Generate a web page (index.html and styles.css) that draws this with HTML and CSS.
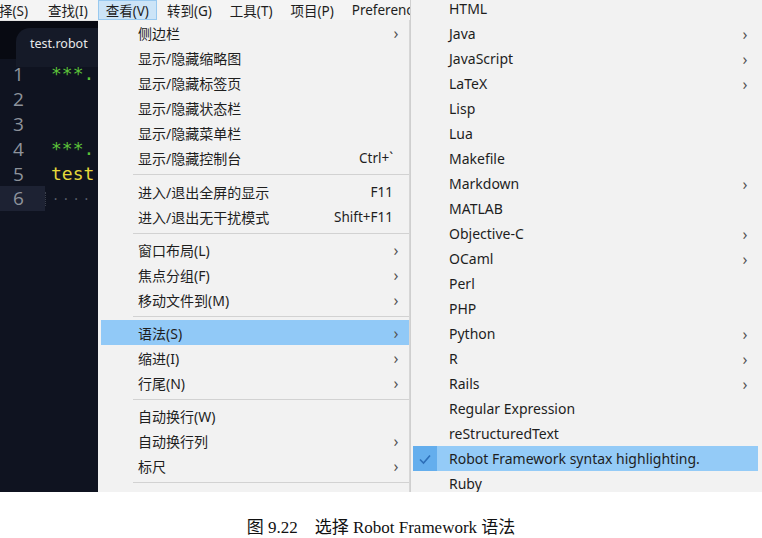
FILE: index.html
```html
<!DOCTYPE html>
<html>
<head>
<meta charset="utf-8">
<link rel="stylesheet" href="styles.css">
</head>
<body>
<div class="shot">
  <div class="leftcol">
    <div class="menubar">
      <span class="mb cut">择(S)</span>
      <span class="mb">查找(I)</span>
      <span class="mb active">查看(V)</span>
      <span class="mb">转到(G)</span>
      <span class="mb">工具(T)</span>
      <span class="mb">项目(P)</span>
      <span class="mb">Preferences</span>
    </div>
    <div class="body">
      <div class="editor">
        <div class="tabs"><div class="tab">test.robot</div></div>
        <div class="lines">
          <div class="ln"><span class="num">1</span><span class="code green">***.</span></div>
          <div class="ln"><span class="num">2</span><span class="code"></span></div>
          <div class="ln"><span class="num">3</span><span class="code"></span></div>
          <div class="ln"><span class="num">4</span><span class="code green">***.</span></div>
          <div class="ln"><span class="num">5</span><span class="code yellow">test</span></div>
          <div class="ln cur"><span class="num">6</span><span class="code dots">····</span></div>
        </div>
      </div>
      <div class="menu">
        <div class="mi"><span class="lbl">侧边栏</span><span class="arr">›</span></div>
        <div class="mi"><span class="lbl">显示/隐藏缩略图</span></div>
        <div class="mi"><span class="lbl">显示/隐藏标签页</span></div>
        <div class="mi"><span class="lbl">显示/隐藏状态栏</span></div>
        <div class="mi"><span class="lbl">显示/隐藏菜单栏</span></div>
        <div class="mi"><span class="lbl">显示/隐藏控制台</span><span class="key">Ctrl+`</span></div>
        <div class="sep first"></div>
        <div class="mi"><span class="lbl">进入/退出全屏的显示</span><span class="key">F11</span></div>
        <div class="mi"><span class="lbl">进入/退出无干扰模式</span><span class="key">Shift+F11</span></div>
        <div class="sep"></div>
        <div class="mi"><span class="lbl">窗口布局(L)</span><span class="arr">›</span></div>
        <div class="mi"><span class="lbl">焦点分组(F)</span><span class="arr">›</span></div>
        <div class="mi"><span class="lbl">移动文件到(M)</span><span class="arr">›</span></div>
        <div class="sep"></div>
        <div class="mi hl"><span class="lbl">语法(S)</span><span class="arr">›</span></div>
        <div class="mi"><span class="lbl">缩进(I)</span><span class="arr">›</span></div>
        <div class="mi"><span class="lbl">行尾(N)</span><span class="arr">›</span></div>
        <div class="sep"></div>
        <div class="mi"><span class="lbl">自动换行(W)</span></div>
        <div class="mi"><span class="lbl">自动换行列</span><span class="arr">›</span></div>
        <div class="mi"><span class="lbl">标尺</span><span class="arr">›</span></div>
        <div class="sep"></div>
      </div>
    </div>
  </div>
  <div class="submenu">
    <div class="sublist">
      <div class="si"><span class="chk"></span><span class="lbl">HTML</span></div>
      <div class="si"><span class="chk"></span><span class="lbl">Java</span><span class="arr">›</span></div>
      <div class="si"><span class="chk"></span><span class="lbl">JavaScript</span><span class="arr">›</span></div>
      <div class="si"><span class="chk"></span><span class="lbl">LaTeX</span><span class="arr">›</span></div>
      <div class="si"><span class="chk"></span><span class="lbl">Lisp</span></div>
      <div class="si"><span class="chk"></span><span class="lbl">Lua</span></div>
      <div class="si"><span class="chk"></span><span class="lbl">Makefile</span></div>
      <div class="si"><span class="chk"></span><span class="lbl">Markdown</span><span class="arr">›</span></div>
      <div class="si"><span class="chk"></span><span class="lbl">MATLAB</span></div>
      <div class="si"><span class="chk"></span><span class="lbl">Objective-C</span><span class="arr">›</span></div>
      <div class="si"><span class="chk"></span><span class="lbl">OCaml</span><span class="arr">›</span></div>
      <div class="si"><span class="chk"></span><span class="lbl">Perl</span></div>
      <div class="si"><span class="chk"></span><span class="lbl">PHP</span></div>
      <div class="si"><span class="chk"></span><span class="lbl">Python</span><span class="arr">›</span></div>
      <div class="si"><span class="chk"></span><span class="lbl">R</span><span class="arr">›</span></div>
      <div class="si"><span class="chk"></span><span class="lbl">Rails</span><span class="arr">›</span></div>
      <div class="si"><span class="chk"></span><span class="lbl">Regular Expression</span></div>
      <div class="si"><span class="chk"></span><span class="lbl">reStructuredText</span></div>
      <div class="si hl"><span class="chk on"><svg width="14" height="12" viewBox="0 0 14 12"><path d="M2 6.5 L5.5 10 L12 2.5" fill="none" stroke="#2d6fb8" stroke-width="1.6"/></svg></span><span class="lbl">Robot Framework syntax highlighting.</span></div>
      <div class="si"><span class="chk"></span><span class="lbl">Ruby</span></div>
    </div>
  </div>
</div>
<div class="caption">图 9.22　选择 Robot Framework 语法</div>
</body>
</html>
```

FILE: styles.css
```css
html, body {
  margin: 0;
  padding: 0;
  background: #ffffff;
}
body {
  width: 762px;
  height: 538px;
  overflow: hidden;
  font-family: "Noto Sans", "Noto Sans CJK SC", sans-serif;
  font-size: 14px;
  color: #1e1e1e;
}
.shot {
  display: flex;
  height: 492px;
  overflow: hidden;
}
.leftcol {
  width: 410px;
  display: flex;
  flex-direction: column;
  flex-shrink: 0;
}
.menubar {
  height: 20px;
  background: #f4f4f4;
  display: flex;
  align-items: stretch;
  white-space: nowrap;
  overflow: hidden;
  font-size: 13.5px;
  border-bottom: 1px solid #e4e4e4;
}
.mb {
  display: flex;
  align-items: center;
  padding: 0 8px;
  margin-right: 2px;
}
.mb.cut {
  padding-left: 0;
  margin-left: -1px;
  padding-right: 10px;
}
.mb.active {
  background: #cce4f7;
  border: 1px solid #99c9ef;
  padding: 0 7px;
}
.body {
  flex: 1;
  display: flex;
  min-height: 0;
}
.editor {
  width: 98px;
  flex-shrink: 0;
  background: #0f1320;
  display: flex;
  flex-direction: column;
}
.tabs {
  height: 38px;
  background: #080a12;
  display: flex;
  align-items: flex-end;
  padding-left: 16px;
}
.tab {
  height: 31px;
  flex: 1;
  background: #151a28;
  border-top-left-radius: 14px;
  color: #e8e8e8;
  font-size: 12.5px;
  display: flex;
  align-items: center;
  padding-left: 14px;
  margin-bottom: -8px;
  padding-bottom: 8px;
}
.lines {
  padding-top: 2px;
}
.ln {
  height: 25px;
  display: flex;
  align-items: center;
}
.num {
  width: 45px;
  padding-left: 13px;
  box-sizing: border-box;
  color: #8e939c;
  font-family: "Open Sans", "Noto Sans", sans-serif;
  font-size: 19px;
}
.ln.cur .num {
  background: #1d2233;
  height: 25px;
  line-height: 25px;
}
.code {
  font-family: "DejaVu Sans Mono", monospace;
  font-size: 18px;
  padding-left: 6px;
}
.green { color: #5cc23a; }
.yellow { color: #e6d83a; }
.dots { color: #5a5f6b; font-size: 12px; letter-spacing: 3px; border-left: 1px dotted #3a3f4b; }
.menu {
  width: 312px;
  flex-shrink: 0;
  background: #f2f2f2;
  padding-top: 0;
  margin-top: -1px;
  box-sizing: border-box;
  border-right: 1px solid #d6d6d6;
}
.mi {
  height: 25px;
  display: flex;
  align-items: center;
  padding-left: 37px;
  padding-right: 8px;
  margin-left: 3px;
}
.mi .lbl {
  flex: 1;
}
.key {
  margin-right: 8px;
  font-size: 13.5px;
}
.arr {
  font-size: 16px;
  color: #555;
  width: 10px;
  text-align: center;
}
.mi.hl {
  background: #91c9f7;
}
.sep {
  height: 8px;
  display: flex;
  align-items: center;
  margin-left: 35px;
}
.sep::after {
  content: "";
  flex: 1;
  height: 1px;
  background: #d2d2d2;
}
.sep.first { height: 9px; }
.submenu {
  flex: 1;
  background: #f2f2f2;
  border-left: 1px solid #cfcfcf;
  overflow: hidden;
}
.sublist {
  margin-top: -4px;
  padding-left: 2px;
  padding-right: 4px;
}
.si {
  height: 25px;
  display: flex;
  align-items: center;
}
.chk {
  width: 24px;
  height: 25px;
  margin-right: 12px;
  display: flex;
  align-items: center;
  justify-content: center;
}
.chk.on {
  background: #64aeed;
}
.si .lbl { flex: 1; }
.si .arr { margin-right: 8px; }
.si.hl {
  background: #94cbf7;
}
.caption {
  text-align: center;
  font-family: "Liberation Serif", "Noto Sans CJK SC", serif;
  font-size: 17px;
  color: #111;
  margin-top: 21px;
  padding-left: 0;
}
```
